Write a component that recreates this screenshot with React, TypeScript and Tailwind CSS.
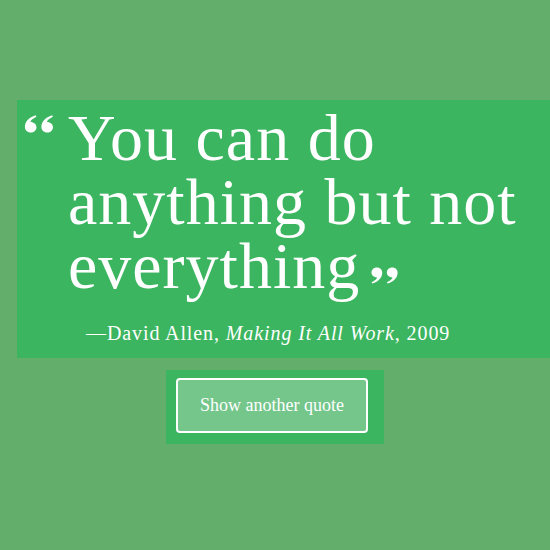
import React from "react";

const QD =
  "M6.2 17.6C2.8 17.6 0.4 15.2 0.4 12.1C0.4 6.8 4.2 2.4 11.2 0.3L11.9 1.8C8 3.6 6.2 5.7 5.9 6.9C9.4 6.9 12 9.2 12 12.2C12 15.2 9.5 17.6 6.2 17.6Z";

function OpenQuote({ className }: { className?: string }) {
  return (
    <svg viewBox="0 0 29 18" className={className} fill="white">
      <path d={QD} />
      <path d={QD} transform="translate(16.5 0)" />
    </svg>
  );
}

function CloseQuote({ className }: { className?: string }) {
  return (
    <svg viewBox="0 0 29 18" className={className} fill="white">
      <g transform="rotate(180 14.5 9)">
        <path d={QD} />
        <path d={QD} transform="translate(16.5 0)" />
      </g>
    </svg>
  );
}

export default function App() {
  return (
    <div
      className="w-[550px] h-[550px] overflow-hidden bg-[#62ae6a] pt-[100px] text-white"
      style={{ fontFamily: '"Liberation Serif", "Times New Roman", serif' }}
    >
      <div className="ml-[17px] w-[560px] bg-[#3bb560] pt-[6px] pb-[11px]">
        <div className="flex">
          <div className="w-[51px] shrink-0 pl-[7px] pt-[9px]">
            <OpenQuote className="w-[30px] h-[18px]" />
          </div>
          <p className="w-[470px] text-[66px] leading-[64px] tracking-[1px]">
            You can do anything but not everything
            <CloseQuote className="inline-block w-[27px] h-[19px] ml-[11px] align-[3px]" />
          </p>
        </div>
        <div className="pl-[69px] pt-[21px] text-[20px] leading-[28px] tracking-[0.9px]">
          —David Allen, <i>Making It All Work</i>, 2009
        </div>
      </div>
      <div className="mt-[12px] flex justify-center">
        <div className="bg-[#3bb560] pl-[10px] pr-[16px] pt-[8px] pb-[11px]">
          <button className="w-[192px] h-[55px] rounded-[4px] border-2 border-white bg-[#74c68b] text-[18px] text-white">
            Show another quote
          </button>
        </div>
      </div>
    </div>
  );
}
